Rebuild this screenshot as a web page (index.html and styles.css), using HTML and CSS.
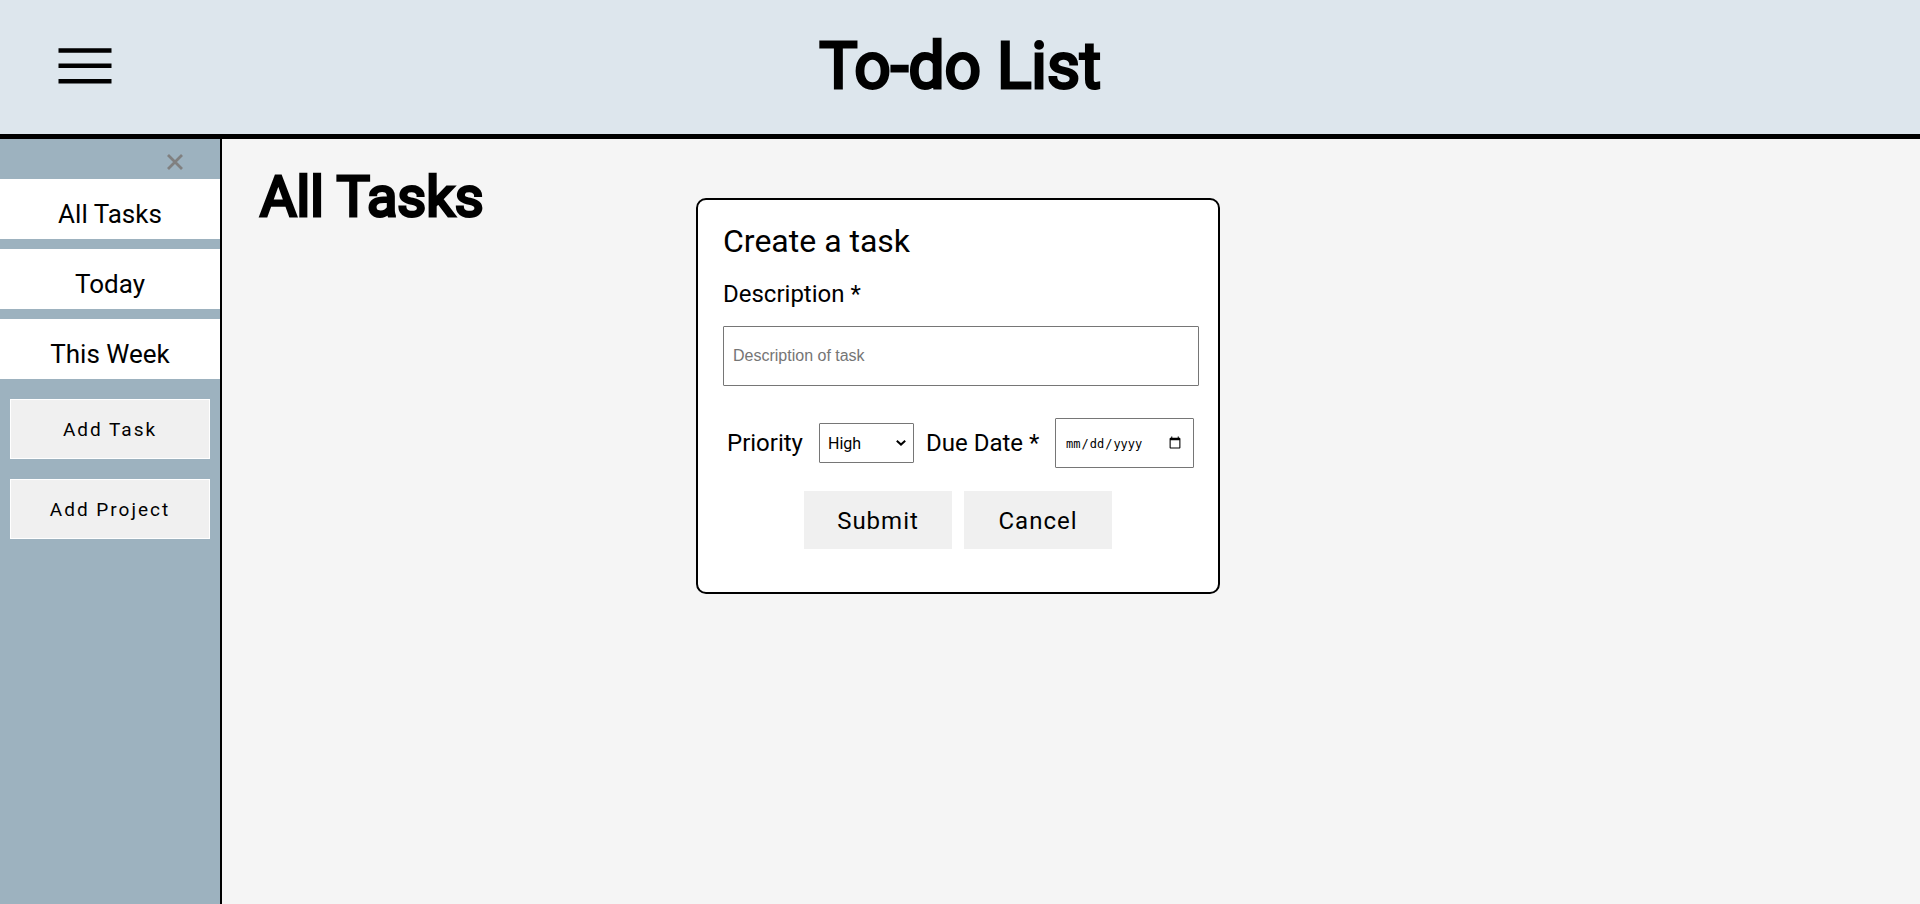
FILE: index.html
```html
<!DOCTYPE html>
<html lang="en">
<head>
<meta charset="utf-8">
<title>To-do List</title>
<link rel="stylesheet" href="styles.css">
</head>
<body>
<header class="header">
  <button class="menu-button" type="button" aria-label="Menu">
    <svg class="menu-icon" viewBox="0 0 54 36" aria-hidden="true">
      <path d="M0.5 2.5H53.5M0.5 17.8H53.5M0.5 33.3H53.5" stroke="#000" stroke-width="4.6"/>
    </svg>
  </button>
  <h1 class="header-title">To-do List</h1>
</header>
<div class="layout">
  <nav class="sidebar">
    <button class="close-button" type="button" aria-label="Close menu">
      <svg class="close-icon" viewBox="0 0 16 16" aria-hidden="true">
        <path d="M1 1L15 15M15 1L1 15" stroke="#808080" stroke-width="2.8"/>
      </svg>
    </button>
    <ul class="nav-list">
      <li><a class="nav-link" href="#">All Tasks</a></li>
      <li><a class="nav-link" href="#">Today</a></li>
      <li><a class="nav-link" href="#">This Week</a></li>
    </ul>
    <div class="sidebar-actions">
      <button class="sidebar-button" type="button">Add Task</button>
      <button class="sidebar-button" type="button">Add Project</button>
    </div>
  </nav>
  <main class="content">
    <h2 class="content-title">All Tasks</h2>
  </main>
</div>
<div class="overlay">
  <form class="task-form">
    <p class="form-title">Create a task</p>
    <label class="form-label" for="description">Description *</label>
    <input class="description-input" id="description" type="text" placeholder="Description of task">
    <div class="form-row">
      <label class="form-label" for="priority">Priority</label>
      <div class="select-box">
        <select class="priority-select" id="priority">
          <option>High</option>
          <option>Medium</option>
          <option>Low</option>
        </select>
        <svg class="select-arrow" viewBox="0 0 10 6" aria-hidden="true">
          <path d="M0.8 0.8L5 4.6L9.2 0.8" fill="none" stroke="#000" stroke-width="2"/>
        </svg>
      </div>
      <label class="form-label due-label" for="due">Due Date *</label>
      <input class="date-input" id="due" type="date">
    </div>
    <div class="form-actions">
      <button class="form-button" type="button">Submit</button>
      <button class="form-button" type="button">Cancel</button>
    </div>
  </form>
</div>
</body>
</html>
```
FILE: styles.css
```css
* {
  box-sizing: border-box;
}

body {
  margin: 0;
  min-height: 100vh;
  display: flex;
  flex-direction: column;
  background: #f5f5f5;
  color: #000;
  font-family: Roboto, sans-serif;
}

button {
  font-family: inherit;
  color: inherit;
  cursor: pointer;
}

.header {
  display: grid;
  grid-template-columns: 1fr auto 1fr;
  align-items: center;
  padding: 28px 58px;
  background: #dde6ed;
  border-bottom: 5px solid #000;
}

.menu-button {
  justify-self: start;
  padding: 0 0 2px;
  border: 0;
  background: none;
}

.menu-icon {
  display: block;
  width: 54px;
  height: 36px;
}

.header-title,
.content-title {
  margin: 0;
  font-weight: 400;
  -webkit-text-stroke: 3px #000;
}

.header-title {
  font-size: 64px;
  line-height: 78px;
}

.layout {
  flex: 1;
  display: flex;
}

.sidebar {
  width: 222px;
  background: #9db2bf;
  border-right: 2px solid #000;
}

.close-button {
  display: block;
  margin-left: auto;
  margin-right: 37px;
  height: 40px;
  padding: 6px 0 0;
  border: 0;
  background: none;
}

.close-icon {
  display: block;
  width: 16px;
  height: 16px;
}

.nav-list {
  display: flex;
  flex-direction: column;
  gap: 10px;
  margin: 0;
  padding: 0;
  list-style: none;
}

.nav-link {
  display: block;
  padding: 10px 0 0;
  height: 60px;
  background: #fff;
  color: #000;
  font-size: 26px;
  line-height: 50px;
  text-align: center;
  text-decoration: none;
}

.sidebar-actions {
  display: flex;
  flex-direction: column;
  gap: 20px;
  padding: 20px 10px;
}

.sidebar-button {
  height: 60px;
  border: 1px solid #fff;
  background: #f0f0f0;
  font-size: 19px;
  letter-spacing: 2px;
}

.content {
  flex: 1;
  padding: 24px 38px;
}

.content-title {
  font-size: 56px;
  line-height: 68px;
}

.overlay {
  position: absolute;
  top: 198px;
  left: 0;
  right: 4px;
  display: flex;
  justify-content: center;
}

.task-form {
  width: 524px;
  padding: 20px 19px 43px 25px;
  border: 2px solid #000;
  border-radius: 10px;
  background: #fff;
}

.form-title {
  margin: 0 0 12px;
  font-size: 32px;
  line-height: 42px;
}

.form-label {
  font-size: 24px;
  line-height: 40px;
}

.description-input {
  display: block;
  width: 100%;
  height: 60px;
  margin-top: 12px;
  padding: 0 9px;
  border: 1px solid #767676;
  border-radius: 1px;
  font-family: "Liberation Sans", sans-serif;
  font-size: 16px;
}

.form-row {
  display: flex;
  align-items: center;
  margin-top: 32px;
  padding: 0 5px 0 4px;
}

.select-box {
  display: grid;
  align-items: center;
  margin-left: 16px;
}

.priority-select {
  grid-area: 1 / 1;
  width: 95px;
  height: 40px;
  padding: 0 8px;
  appearance: none;
  border: 1px solid #767676;
  border-radius: 1px;
  background: #fff;
  color: #000;
  font-family: Roboto, sans-serif;
  font-size: 16px;
}

.select-arrow {
  grid-area: 1 / 1;
  justify-self: end;
  width: 10px;
  height: 6px;
  margin-right: 8px;
  pointer-events: none;
}

.due-label {
  margin-left: 12px;
}

.date-input {
  width: 139px;
  height: 50px;
  margin-left: auto;
  padding: 2px 9px 0 9px;
  border: 1px solid #767676;
  border-radius: 1px;
  background: #fff;
  color: #000;
  font-family: "DejaVu Sans Mono", monospace;
  font-size: 12px;
}

.date-input::-webkit-calendar-picker-indicator {
  width: 14px;
  height: 14px;
  margin-bottom: 2px;
}

.form-actions {
  display: flex;
  justify-content: center;
  gap: 12px;
  margin-top: 23px;
  padding-right: 6px;
}

.form-button {
  width: 148px;
  height: 58px;
  padding: 2px 0 0;
  border: 0;
  background: #f0f0f0;
  font-size: 24px;
  letter-spacing: 1px;
}
```
